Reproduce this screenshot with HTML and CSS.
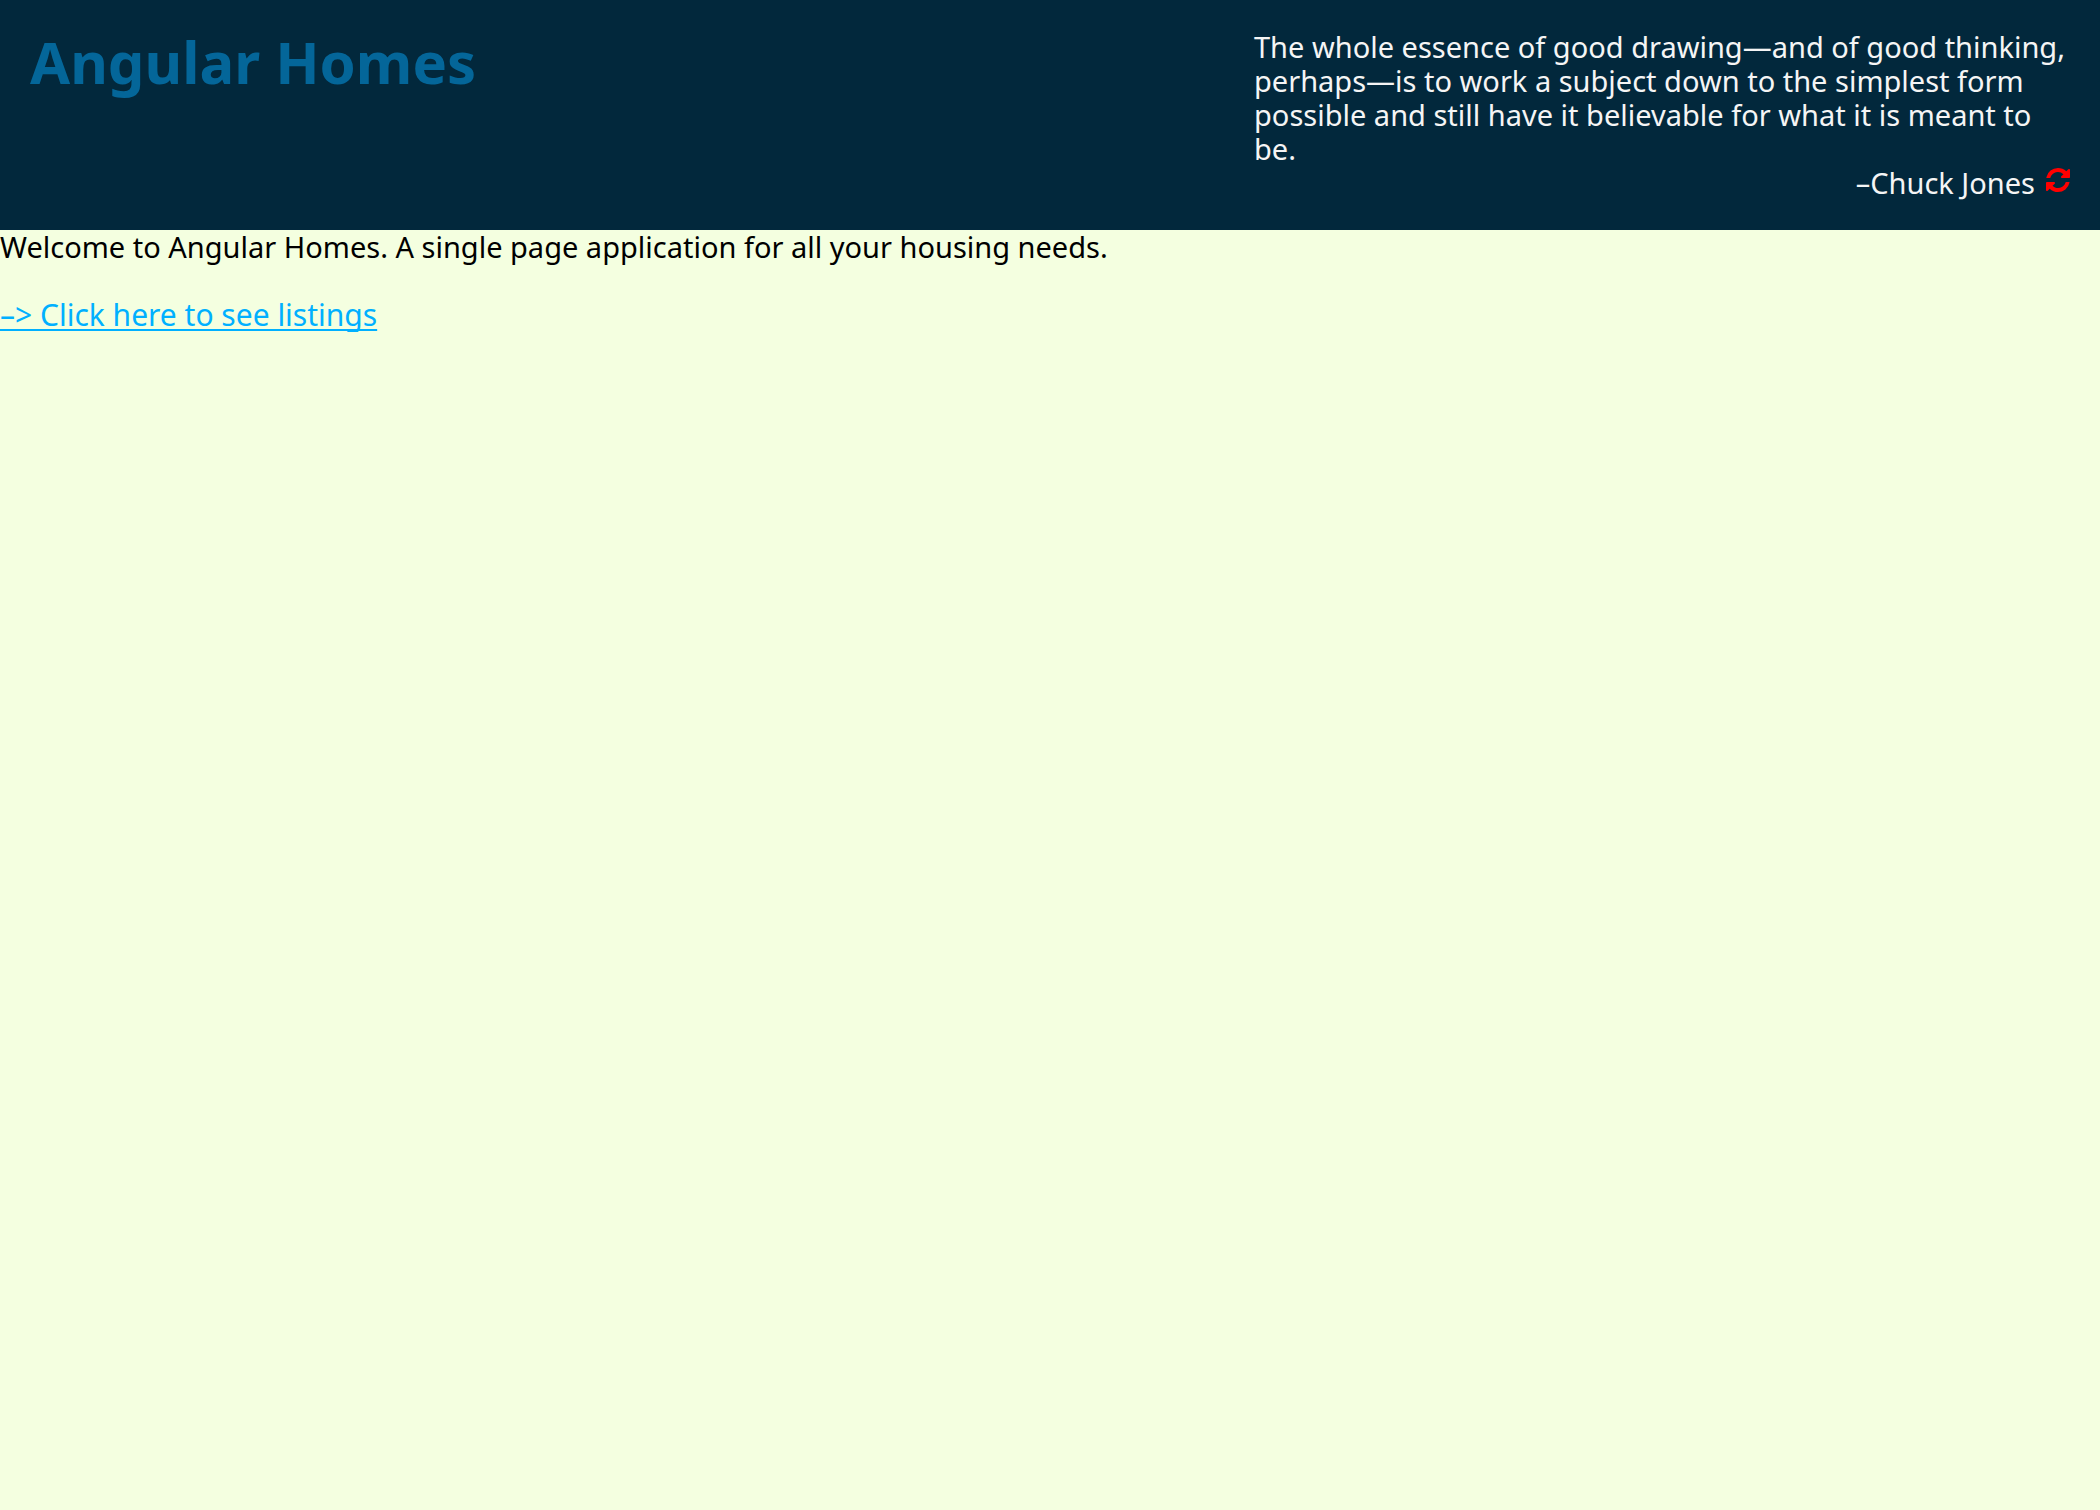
FILE: index.html
```html
<!DOCTYPE html>
<html lang="en">
<head>
<meta charset="utf-8">
<meta name="viewport" content="width=device-width, initial-scale=1">
<title>Angular Homes</title>
<link rel="stylesheet" href="styles.css">
</head>
<body>
<header class="site-header">
  <h1 class="site-title">Angular Homes</h1>
  <figure class="quote">
    <blockquote class="quote-text">The whole essence of good drawing—and of good thinking, perhaps—is to work a subject down to the simplest form possible and still have it believable for what it is meant to be.</blockquote>
    <figcaption class="quote-author">
      <span>–Chuck Jones</span>
      <button class="refresh" type="button" aria-label="New quote">
        <svg class="refresh-icon" viewBox="128 128 1536 1536" aria-hidden="true"><path d="M1639 1056q0 5-1 7-64 268-268 434.5t-478 166.5q-146 0-282.5-55t-243.5-157l-129 129q-19 19-45 19t-45-19-19-45v-448q0-26 19-45t45-19h448q26 0 45 19t19 45-19 45l-137 137q71 66 161 102t187 36q134 0 250-65t186-179q11-17 53-117 8-23 30-23h192q13 0 22.5 9.5t9.5 22.5zm25-800v448q0 26-19 45t-45 19h-448q-26 0-45-19t-19-45 19-45l138-138q-148-137-349-137-134 0-250 65t-186 179q-11 17-53 117-8 23-30 23h-199q-13 0-22.5-9.5t-9.5-22.5v-7q65-268 270-434.5t480-166.5q146 0 284 55.5t245 156.5l130-129q19-19 45-19t45 19 19 45z"/></svg>
      </button>
    </figcaption>
  </figure>
</header>
<main class="welcome">
  <p class="intro">Welcome to Angular Homes. A single page application for all your housing needs.</p>
  <a class="listings-link" href="#listings">–&gt; Click here to see listings</a>
</main>
</body>
</html>
```
FILE: styles.css
```css
* {
  box-sizing: border-box;
}

body {
  margin: 0;
  background: #f4ffe0;
  color: #000;
  font-family: "Noto Sans", "Open Sans", sans-serif;
  font-size: 29px;
  line-height: 34px;
}

.site-header {
  display: flex;
  justify-content: space-between;
  align-items: flex-start;
  padding: 30px;
  background: #02283c;
}

.site-title {
  margin: 0;
  color: #046699;
  font-size: 58px;
  line-height: 64px;
  font-weight: 700;
}

.quote {
  width: 40%;
  margin: 0;
  color: #f5f5f5;
}

.quote-text {
  margin: 0;
}

.quote-author {
  display: flex;
  justify-content: flex-end;
  gap: 11px;
}

.refresh {
  display: flex;
  align-items: flex-start;
  padding: 2px 0 0;
  border: 0;
  background: none;
  color: #f00;
  cursor: pointer;
}

.refresh-icon {
  display: block;
  width: 24px;
  height: 24px;
  fill: currentColor;
}

.intro {
  margin: 0 0 34px;
}

.listings-link {
  color: #00b0ff;
  font-size: 30px;
  text-decoration-thickness: 2px;
  text-decoration-skip-ink: none;
  text-underline-offset: 3px;
}
```
